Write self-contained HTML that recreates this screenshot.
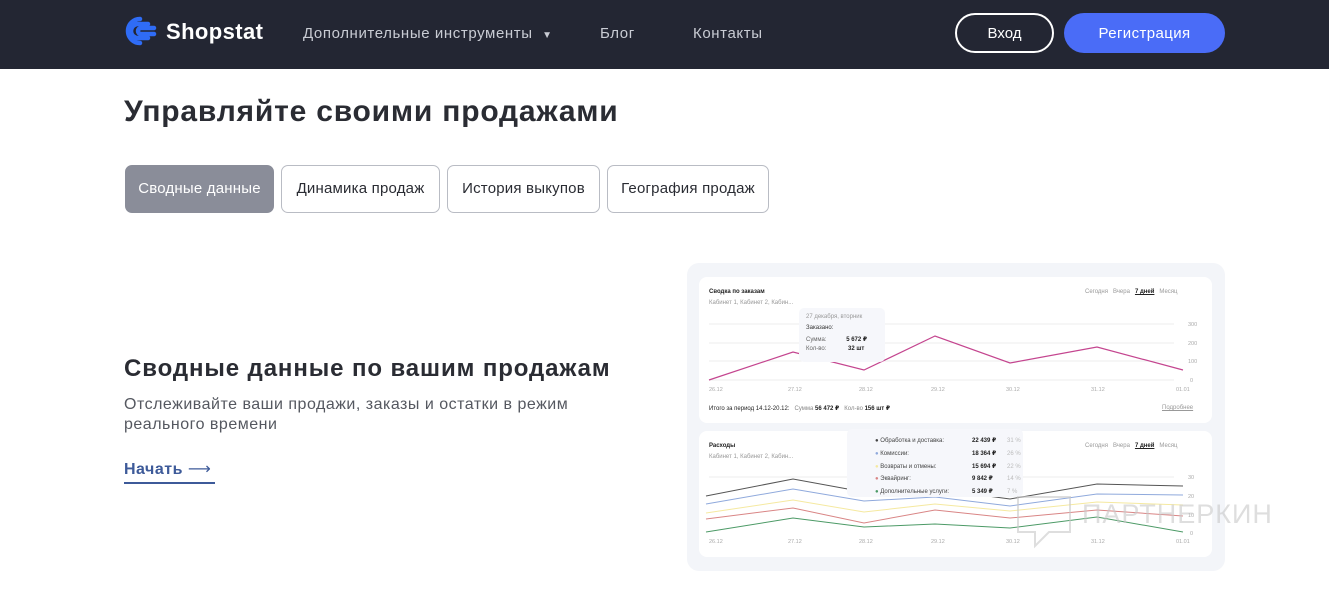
<!DOCTYPE html>
<html><head><meta charset="utf-8"><style>
*{margin:0;padding:0;box-sizing:border-box}
body{width:1329px;height:602px;overflow:hidden;background:#fff;font-family:"Liberation Sans","DejaVu Sans",sans-serif;position:relative;color:#26282e}
.abs{position:absolute}
.nav{left:0;top:0;width:1329px;height:69px;background:#232633}
.navt{color:#c9ccd4;font-size:15px;top:24px;letter-spacing:.6px}
.tab{top:165px;height:48px;border:1px solid #b9bcc4;border-radius:7px;font-size:15px;line-height:46px;text-align:center;color:#2a2c33;letter-spacing:.2px}
.s{font-size:6px;color:#999;white-space:nowrap}
.b{font-size:6px;color:#222;font-weight:bold;white-space:nowrap}
.tt div{position:relative;height:12.8px}
</style></head><body>
<div class="abs nav"></div>
<svg class="abs" style="left:124px;top:16px" width="34" height="30" viewBox="0 0 34 30"><path d="M16 3 A12 12 0 1 0 16 27 M24 8 H14 A7 7 0 0 0 14 22 H24 M30 12 H17 A3 3 0 0 0 17 18 H30" fill="none" stroke="#2f6cf6" stroke-width="4.5" stroke-linecap="round"/></svg>
<div class="abs" style="left:166px;top:19px;color:#fff;font-size:22px;font-weight:bold;letter-spacing:.4px">Shopstat</div>
<div class="abs navt" style="left:303px;top:25px">Дополнительные инструменты &nbsp;<span style="font-size:10px">▼</span></div>
<div class="abs navt" style="left:600px;top:25px">Блог</div>
<div class="abs navt" style="left:693px;top:25px">Контакты</div>
<div class="abs" style="left:955px;top:13px;width:99px;height:40px;border:2px solid #fff;border-radius:20px;color:#fff;font-size:15px;text-align:center;line-height:38px">Вход</div>
<div class="abs" style="left:1064px;top:13px;width:161px;height:40px;background:#4a6cf7;border-radius:20px;color:#fff;font-size:15px;text-align:center;line-height:41px;letter-spacing:.4px">Регистрация</div>

<div class="abs" style="left:124px;top:95px;font-size:30px;font-weight:bold;color:#2a2c33;letter-spacing:.8px">Управляйте своими продажами</div>
<div class="abs tab" style="left:125px;width:149px;background:#8a8d99;border-color:#8a8d99;color:#fff">Сводные данные</div>
<div class="abs tab" style="left:281px;width:159px">Динамика продаж</div>
<div class="abs tab" style="left:447px;width:153px">История выкупов</div>
<div class="abs tab" style="left:607px;width:162px">География продаж</div>

<div class="abs" style="left:124px;top:355px;font-size:24px;font-weight:bold;color:#2a2c33;letter-spacing:.9px">Сводные данные по вашим продажам</div>
<div class="abs" style="left:124px;top:395px;font-size:16px;line-height:20px;color:#555860;width:480px;letter-spacing:.5px">Отслеживайте ваши продажи, заказы и остатки в режим реального времени</div>
<div class="abs" style="left:124px;top:459px;font-size:16px;font-weight:bold;color:#3d5a99;letter-spacing:.5px">Начать <span style="font-weight:normal">⟶</span></div>
<div class="abs" style="left:124px;top:482px;width:91px;height:2px;background:#3d5a99"></div>

<div class="abs" style="left:687px;top:263px;width:538px;height:308px;background:#f3f5f9;border-radius:12px"></div>
<div class="abs" style="left:699px;top:277px;width:513px;height:146px;background:#fff;border-radius:8px"></div>
<div class="abs" style="left:699px;top:431px;width:513px;height:126px;background:#fff;border-radius:8px"></div>

<div class="abs b" style="left:709px;top:289px">Сводка по заказам</div>
<div class="abs s" style="left:709px;top:300px">Кабинет 1, Кабинет 2, Кабин...</div>
<div class="abs s" style="left:1085px;top:289px">Сегодня &nbsp; Вчера &nbsp; <b style="color:#222;text-decoration:underline">7 дней</b> &nbsp; Месяц</div>
<svg class="abs" style="left:699px;top:277px" width="513" height="146">
<g stroke="#eee" stroke-width="1"><line x1="10" y1="47" x2="475" y2="47"/><line x1="10" y1="66" x2="475" y2="66"/><line x1="10" y1="84" x2="475" y2="84"/><line x1="10" y1="103" x2="475" y2="103"/></g>
<polyline points="10,103 94,75 165,93 236,59 311,86 398,70 484,93" fill="none" stroke="#c4458f" stroke-width="1.2"/>
<g font-size="5.5" fill="#aaa" font-family="Liberation Sans"><text x="489" y="49">300</text><text x="489" y="68">200</text><text x="489" y="86">100</text><text x="491" y="105">0</text>
<text x="10" y="114">26.12</text><text x="89" y="114">27.12</text><text x="160" y="114">28.12</text><text x="232" y="114">29.12</text><text x="307" y="114">30.12</text><text x="392" y="114">31.12</text><text x="477" y="114">01.01</text></g>
</svg>
<div class="abs" style="left:799px;top:308px;width:86px;height:54px;background:#f6f7fb;border-radius:5px"></div>
<div class="abs s" style="left:806px;top:314px">27 декабря, вторник</div>
<div class="abs b" style="left:806px;top:325px;font-weight:normal;color:#333">Заказано:</div>
<div class="abs s" style="left:806px;top:336px;color:#666">Сумма: <b style="color:#222;margin-left:18px">5 672 ₽</b></div>
<div class="abs s" style="left:806px;top:346px;color:#666">Кол-во: <b style="color:#222;margin-left:20px">32 шт</b></div>
<div class="abs b" style="left:709px;top:405px;font-weight:normal">Итого за период 14.12-20.12: &nbsp; <span style="color:#888">Сумма</span> <b>56 472 ₽</b> &nbsp; <span style="color:#888">Кол-во</span> <b>156 шт ₽</b></div>
<div class="abs s" style="left:1162px;top:405px;text-decoration:underline">Подробнее</div>

<div class="abs b" style="left:709px;top:443px">Расходы</div>
<div class="abs s" style="left:709px;top:454px">Кабинет 1, Кабинет 2, Кабин...</div>
<div class="abs s" style="left:1085px;top:443px">Сегодня &nbsp; Вчера &nbsp; <b style="color:#222;text-decoration:underline">7 дней</b> &nbsp; Месяц</div>
<svg class="abs" style="left:699px;top:431px" width="513" height="126">
<line x1="10" y1="46" x2="475" y2="46" stroke="#eee"/>
<polyline points="7,65 94,48 165,61 236,58 311,68 398,53 484,55" fill="none" stroke="#555" stroke-width="1"/>
<polyline points="7,73 94,58 165,70 236,66 311,75 398,63 484,64" fill="none" stroke="#8fa9dc" stroke-width="1"/>
<polyline points="7,82 94,69 165,81 236,73 311,80 398,71 484,74" fill="none" stroke="#f5e9a0" stroke-width="1"/>
<polyline points="7,88 94,77 165,92 236,79 311,87 398,79 484,85" fill="none" stroke="#d98585" stroke-width="1"/>
<polyline points="7,101 94,87 165,96 236,93 311,97 398,86 484,101" fill="none" stroke="#4c9a66" stroke-width="1"/>
<g font-size="5.5" fill="#aaa" font-family="Liberation Sans"><text x="489" y="48">30</text><text x="489" y="67">20</text><text x="489" y="86">10</text><text x="491" y="104">0</text>
<text x="10" y="112">26.12</text><text x="89" y="112">27.12</text><text x="160" y="112">28.12</text><text x="232" y="112">29.12</text><text x="307" y="112">30.12</text><text x="392" y="112">31.12</text><text x="477" y="112">01.01</text></g>
</svg>
<div class="abs" style="left:847px;top:429px;width:176px;height:68px;background:#f6f7fb;border-radius:5px"></div>
<div class="abs s tt" style="left:875px;top:435px;width:145px;line-height:12.8px;color:#444">
<div><span style="color:#444">●</span> Обработка и доставка: <b style="position:absolute;left:97px;top:0;color:#222">22 439 ₽</b><span style="position:absolute;left:132px;top:0;color:#bbb">31 %</span></div>
<div><span style="color:#8fa9dc">●</span> Комиссии: <b style="position:absolute;left:97px;top:0;color:#222">18 364 ₽</b><span style="position:absolute;left:132px;top:0;color:#bbb">26 %</span></div>
<div><span style="color:#f5e9a0">●</span> Возвраты и отмены: <b style="position:absolute;left:97px;top:0;color:#222">15 694 ₽</b><span style="position:absolute;left:132px;top:0;color:#bbb">22 %</span></div>
<div><span style="color:#d98585">●</span> Эквайринг: <b style="position:absolute;left:97px;top:0;color:#222">9 842 ₽</b><span style="position:absolute;left:132px;top:0;color:#bbb">14 %</span></div>
<div><span style="color:#4c9a66">●</span> Дополнительные услуги: <b style="position:absolute;left:97px;top:0;color:#222">5 349 ₽</b><span style="position:absolute;left:132px;top:0;color:#bbb">7 %</span></div>
</div>
<svg class="abs" style="left:1015px;top:494px" width="60" height="56"><path d="M3 3 H55 V38 H34 L20 52 V38 H3 Z" fill="none" stroke="rgba(200,200,200,.6)" stroke-width="2"/></svg>
<div class="abs" style="left:1082px;top:499px;font-size:27px;color:rgba(200,200,200,.6);letter-spacing:1px">ПАРТНЕРКИН</div>
</body></html>
